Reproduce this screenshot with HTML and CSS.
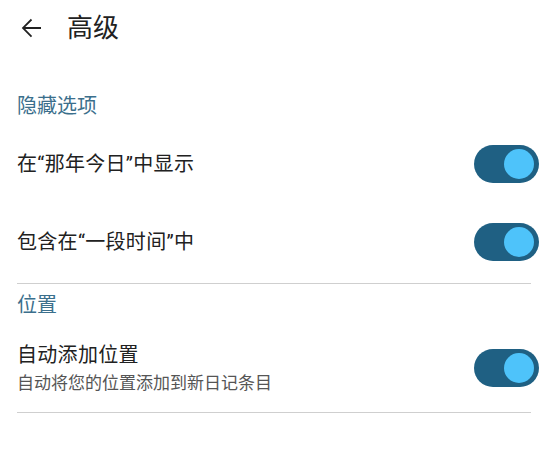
FILE: index.html
```html
<!DOCTYPE html>
<html lang="zh-CN">
<head>
<meta charset="utf-8">
<link rel="stylesheet" href="styles.css">
</head>
<body>
<header class="appbar">
  <svg class="back" width="30" height="30" viewBox="0 0 24 24"><path d="M20 11.2H7.4l5.5-5.5L11.9 4.6 4.6 12l7.3 7.4 1-1.1-5.5-5.5H20v-1.6z" fill="#212121"/></svg>
  <h1 class="title">高级</h1>
</header>
<main>
  <div class="section-title first">隐藏选项</div>
  <div class="row">
    <div class="label">在“那年今日”中显示</div>
    <div class="toggle"><span class="thumb"></span></div>
  </div>
  <div class="row">
    <div class="label">包含在“一段时间”中</div>
    <div class="toggle"><span class="thumb"></span></div>
  </div>
  <div class="divider"></div>
  <div class="section-title">位置</div>
  <div class="row tall">
    <div class="texts">
      <div class="label">自动添加位置</div>
      <div class="sub">自动将您的位置添加到新日记条目</div>
    </div>
    <div class="toggle raised"><span class="thumb"></span></div>
  </div>
  <div class="divider"></div>
</main>
</body>
</html>
```
FILE: styles.css
```css
html, body {
  margin: 0;
  padding: 0;
  background: #ffffff;
  font-family: Roboto, "Noto Sans CJK SC", sans-serif;
  color: #212121;
}
.appbar {
  height: 56px;
  display: flex;
  align-items: center;
  padding-left: 16px;
}
.back {
  display: block;
}
.title {
  margin: 0 0 0 21px;
  font-size: 26px;
  font-weight: 400;
  line-height: 56px;
}
.section-title {
  color: #3b6f8c;
  font-size: 20px;
  line-height: 28px;
  padding: 7px 17px 6px;
}
.section-title.first {
  padding-top: 36px;
  padding-bottom: 5px;
}
.row {
  height: 78px;
  display: flex;
  align-items: center;
  justify-content: space-between;
  padding: 0 10px 0 17px;
}
.row.tall {
  height: auto;
  padding-top: 16px;
  padding-bottom: 13px;
}
.label {
  font-size: 20px;
  line-height: 28px;
  letter-spacing: 0.3px;
}
.sub {
  font-size: 17px;
  line-height: 28px;
  color: #555555;
}
.toggle {
  width: 65px;
  height: 38px;
  border-radius: 19px;
  background: #1f6083;
  display: flex;
  align-items: center;
  justify-content: flex-end;
  padding-right: 5px;
  box-sizing: border-box;
}
.toggle.raised {
  margin-bottom: 3px;
}
.thumb {
  width: 30px;
  height: 30px;
  border-radius: 50%;
  background: #4ec3fa;
}
.divider {
  height: 1px;
  background: #cfcfcf;
  margin: 2px 18px 0 17px;
}
```
